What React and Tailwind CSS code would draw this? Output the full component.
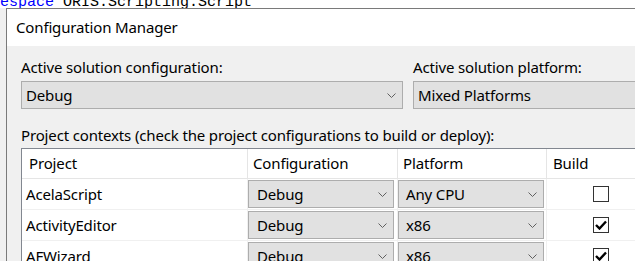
import React from 'react';

const ui = { fontFamily: '"Noto Sans", "Open Sans", sans-serif', letterSpacing: '-0.15px' };

function Chevron() {
  return (
    <svg width="9" height="5" viewBox="0 0 9 5" className="shrink-0">
      <path d="M0.5 0.5 L4.5 4.5 L8.5 0.5" fill="none" stroke="#606060" strokeWidth="1" />
    </svg>
  );
}

function Combo({ value, className = '', chevron = true }) {
  return (
    <div className={`flex items-center justify-between border border-[#adadad] bg-[#e1e1e1] pr-[6px] text-[15px] text-black ${className}`}>
      <span>{value}</span>
      {chevron && <Chevron />}
    </div>
  );
}

function Checkbox({ checked }) {
  return (
    <div className="flex h-[16px] w-[16px] items-center justify-center border border-[#333333] bg-white">
      {checked && (
        <svg width="12" height="10" viewBox="0 0 12 10">
          <path d="M1 5 L4.5 8.5 L11 1.5" fill="none" stroke="#000" strokeWidth="2.4" />
        </svg>
      )}
    </div>
  );
}

const rows = [
  { name: 'AcelaScript', config: 'Debug', platform: 'Any CPU', build: false },
  { name: 'ActivityEditor', config: 'Debug', platform: 'x86', build: true },
  { name: 'AFWizard', config: 'Debug', platform: 'x86', build: true },
];

export default function App() {
  return (
    <div className="h-[261px] w-[635px] overflow-hidden bg-white" style={ui}>
      <div className="h-[8px] overflow-hidden">
        <div className="-mt-[6px] whitespace-nowrap text-[15px] leading-[18px] tracking-normal" style={{ fontFamily: '"Liberation Mono", monospace' }}>
          <span className="text-[#0000ff]">espace</span> <span className="text-black">ORIS.Scripting.Script</span>
        </div>
      </div>
      <div className="flex">
        <div className="w-[6px] shrink-0 bg-[#f0f0f0]" />
        <div className="w-[700px] shrink-0 border-l border-t border-[#7a7a7a]">
          <div className="flex h-[37px] items-center bg-white pl-[9px] text-[15px] text-black">
            Configuration Manager
          </div>
          <div className="h-[300px] bg-[#f0f0f0] pl-[14px] pt-[12px]">
            <div className="flex gap-[10px]">
              <div className="w-[382px]">
                <div className="mb-[5px] text-[15px] leading-[18px] text-black">Active solution configuration:</div>
                <Combo value="Debug" className="h-[28px] pl-[4px]" />
              </div>
              <div className="w-[260px]">
                <div className="mb-[5px] text-[15px] leading-[18px] text-black">Active solution platform:</div>
                <Combo value="Mixed Platforms" className="h-[28px] pl-[4px]" chevron={false} />
              </div>
            </div>
            <div className="mt-[17px] text-[15px] leading-[18px] text-black">
              Project contexts (check the project configurations to build or deploy):
            </div>
            <div className="mt-[4px] w-[700px] border-l border-t border-[#828790] bg-white">
              <div className="flex h-[30px] border-b border-[#e5e5e5] text-[15px] text-black">
                <div className="flex w-[226px] items-center border-r border-[#e5e5e5] pl-[7px]">Project</div>
                <div className="flex w-[150px] items-center border-r border-[#e5e5e5] pl-[5px]">Configuration</div>
                <div className="flex w-[149px] items-center border-r border-[#e5e5e5] pl-[5px]">Platform</div>
                <div className="flex w-[111px] items-center pl-[6px]">Build</div>
              </div>
              {rows.map((r) => (
                <div key={r.name} className="flex h-[31px] border-b border-[#f0f0f0] text-[15px] text-black">
                  <div className="flex w-[226px] items-center border-r border-[#f0f0f0] pl-[4px]">{r.name}</div>
                  <div className="w-[150px] border-r border-[#f0f0f0] pr-[3px] pt-[1px]">
                    <Combo value={r.config} className="h-[28px] pl-[8px]" />
                  </div>
                  <div className="w-[149px] border-r border-[#f0f0f0] pr-[2px] pt-[1px]">
                    <Combo value={r.platform} className="h-[28px] pl-[7px]" />
                  </div>
                  <div className="flex w-[108px] items-center justify-center">
                    <Checkbox checked={r.build} />
                  </div>
                </div>
              ))}
            </div>
          </div>
        </div>
      </div>
    </div>
  );
}
